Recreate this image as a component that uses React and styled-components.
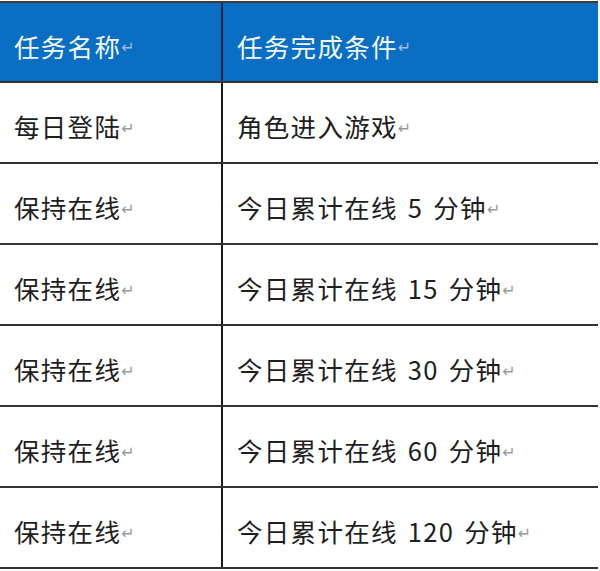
import React from "react";
import styled, { createGlobalStyle } from "styled-components";

const Global = createGlobalStyle`
  html, body { margin: 0; padding: 0; background: #ffffff; }
  body { font-family: "Noto Sans CJK SC", "Microsoft YaHei", sans-serif; }
`;

const Table = styled.div`
  margin-top: 1px;
  width: 598px;
  border-top: 2px solid #3a3a3a;
`;

const Row = styled.div`
  display: grid;
  grid-template-columns: 221px 1fr;
  height: ${(p) => (p.$header ? 80 : 81)}px;
  box-sizing: border-box;
  border-bottom: 2px solid #333;
  background: ${(p) => (p.$header ? "#0a6fc2" : "#ffffff")};
  color: ${(p) => (p.$header ? "#f2f6fb" : "#1e1e1e")};
`;

const Cell = styled.div`
  display: flex;
  align-items: center;
  padding: 6px 0 0 14px;
  font-size: 25.5px;
  letter-spacing: 1.3px;
  word-spacing: 3px;
  white-space: pre;
  box-sizing: border-box;
  border-left: ${(p) => (p.$divider ? "2px solid " + (p.$header ? "#14264a" : "#1a1a1a") : "none")};
`;

const Mark = styled.span`
  font-family: "DejaVu Sans", sans-serif;
  font-size: 16px;
  letter-spacing: 0;
  margin-left: 0;
  margin-top: 5px;
  color: ${(p) => (p.$header ? "#9bbbe0" : "#9a9a9a")};
`;

const rows = [
  ["每日登陆", "角色进入游戏"],
  ["保持在线", "今日累计在线 5 分钟"],
  ["保持在线", "今日累计在线 15 分钟"],
  ["保持在线", "今日累计在线 30 分钟"],
  ["保持在线", "今日累计在线 60 分钟"],
  ["保持在线", "今日累计在线 120 分钟"],
];

function Line({ header, cells }) {
  return (
    <Row $header={header}>
      <Cell $header={header}>
        {cells[0]}
        <Mark $header={header}>↵</Mark>
      </Cell>
      <Cell $header={header} $divider>
        {cells[1]}
        <Mark $header={header}>↵</Mark>
      </Cell>
    </Row>
  );
}

export default function App() {
  return (
    <>
      <Global />
      <Table>
        <Line header cells={["任务名称", "任务完成条件"]} />
        {rows.map((r, i) => (
          <Line key={i} cells={r} />
        ))}
      </Table>
    </>
  );
}
